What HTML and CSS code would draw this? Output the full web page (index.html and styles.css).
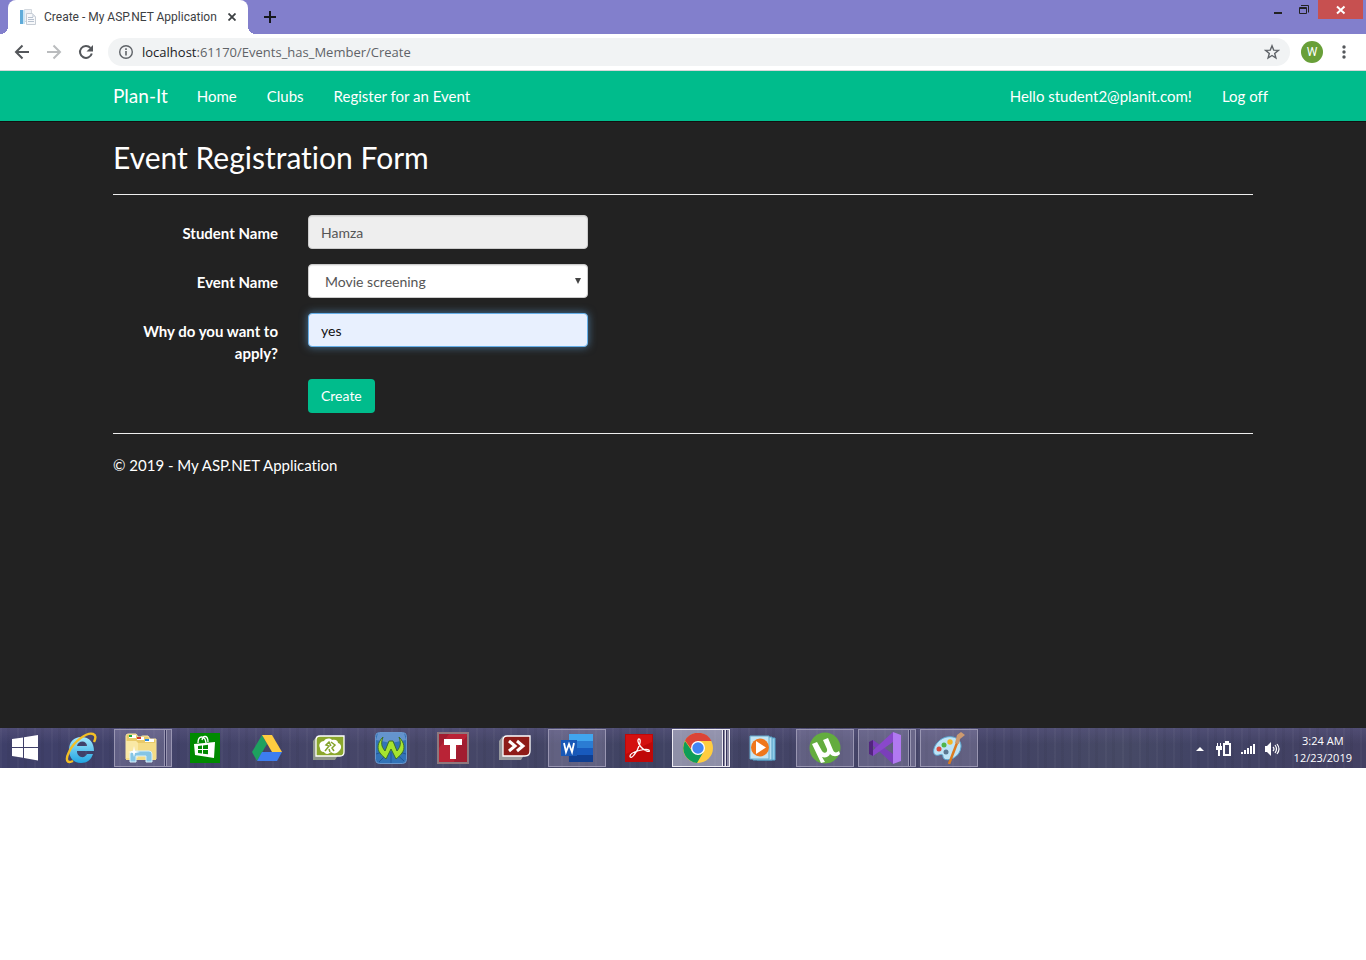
FILE: index.html
```html
<!DOCTYPE html>
<html lang="en">
<head>
<meta charset="utf-8">
<title>Create - My ASP.NET Application</title>
<link rel="stylesheet" href="styles.css">
</head>
<body>
<div class="tabstrip">
  <div class="tab">
    <svg class="tab-icon" width="16" height="16" viewBox="0 0 16 16"><path fill="#eef1f5" stroke="#d3d8de" d="M4.500 .5h7v12h-7z"/><path fill="#5fabd9" d="M0 1h3v14H0z"/><path fill="#c9e4f4" d="M3 1h2v14H3z"/><path fill="#f7f8fa" stroke="#c6ccd4" d="M6.500 4.500h6l3 3v8h-9z"/><path stroke="#b6c1cf" d="M8 8.500h5M8 10.500h6M8 12.500h6"/><path fill="#d7dde5" d="M12 4v4h4z"/></svg>
    <span class="tab-title">Create - My ASP.NET Application</span>
    <button class="icon-button tab-close" aria-label="Close tab"><svg width="8" height="8" viewBox="0 0 8 8"><path fill="none" stroke="#3c4043" stroke-width="1.800" d="M.5 .5l7 7M7.500 .5l-7 7"/></svg></button>
  </div>
  <button class="icon-button new-tab" aria-label="New tab"><svg width="12" height="12" viewBox="0 0 12 12"><path stroke="#17181d" stroke-width="2" d="M6 0v12M0 6h12"/></svg></button>
  <div class="window-controls">
    <button class="icon-button window-button" aria-label="Minimize"><svg width="12" height="12" viewBox="0 0 12 12"><path fill="#222" d="M2 8h8v2H2z"/></svg></button>
    <button class="icon-button window-button" aria-label="Restore"><svg width="12" height="12" viewBox="0 0 12 12"><path fill="none" stroke="#222" d="M1.500 3.500h7v6h-7zM1 4.500h8M3 1.500h7.500v7"/></svg></button>
    <button class="icon-button window-close" aria-label="Close"><svg width="10" height="10" viewBox="0 0 10 10"><path stroke="#fff" stroke-width="2" d="M1 1.500l7.500 7M8.500 1.500L1 8.500"/></svg></button>
  </div>
</div>
<div class="toolbar">
  <button class="icon-button nav-button" aria-label="Back"><svg width="16" height="16" viewBox="0 0 16 16"><path fill="none" stroke="#54575b" stroke-width="2" d="M15 8H2.500M8.500 1.500L2 8l6.500 6.500"/></svg></button>
  <button class="icon-button nav-button" aria-label="Forward"><svg width="16" height="16" viewBox="0 0 16 16"><path fill="none" stroke="#babcbe" stroke-width="2" d="M1 8h12.500M7.500 1.500L14 8l-6.500 6.500"/></svg></button>
  <button class="icon-button nav-button" aria-label="Reload"><svg width="16" height="16" viewBox="0 0 16 16"><path fill="none" stroke="#54575b" stroke-width="2" d="M13.800 9.500A6 6 0 1 1 12.500 3.900"/><path fill="#54575b" d="M15 1v6.500H8.500z"/></svg></button>
  <div class="address">
    <svg width="16" height="16" viewBox="0 0 16 16"><circle cx="8" cy="8" r="6.300" fill="none" stroke="#5f6368" stroke-width="1.400"/><path fill="#5f6368" d="M7.200 7h1.600v4.500H7.200zM7.200 4.300h1.600v1.600H7.200z"/></svg>
    <span class="url"><span class="url-host">localhost</span>:61170/Events_has_Member/Create</span>
    <button class="icon-button" aria-label="Bookmark this page"><svg width="16" height="16" viewBox="0 0 16 16"><path fill="none" stroke="#5f6368" stroke-width="1.400" d="M8 1.800l1.700 4.300 4.600.3-3.600 3 1.200 4.600L8 11.500 4.100 14l1.200-4.600-3.600-3 4.600-.3z"/></svg></button>
  </div>
  <button class="avatar" aria-label="Profile W">W</button>
  <button class="icon-button menu" aria-label="Menu"><svg width="4" height="14" viewBox="0 0 4 14"><g fill="#54575b"><circle cx="2" cy="2" r="1.700"/><circle cx="2" cy="7" r="1.700"/><circle cx="2" cy="12" r="1.700"/></g></svg></button>
</div>

<div class="page">
  <nav class="navbar">
    <div class="container navbar-inner">
      <a class="brand" href="#">Plan-It</a>
      <a class="nav-link" href="#">Home</a>
      <a class="nav-link" href="#">Clubs</a>
      <a class="nav-link" href="#">Register for an Event</a>
      <div class="nav-right">
        <a class="nav-link" href="#">Hello student2@planit.com!</a>
        <a class="nav-link" href="#">Log off</a>
      </div>
    </div>
  </nav>
  <main class="container">
    <h2 class="title">Event Registration Form</h2>
    <hr class="rule">
    <form class="form">
      <label class="label" for="student">Student Name</label>
      <input class="control control-readonly" id="student" value="Hamza" readonly>
      <label class="label" for="event">Event Name</label>
      <div class="select-wrap">
        <select class="control control-select" id="event"><option>Movie screening</option></select>
        <svg class="select-arrow" width="6" height="6" viewBox="0 0 6 6"><path fill="#444" d="M0 0h6L3 6z"/></svg>
      </div>
      <label class="label" for="reason">Why do you want to apply?</label>
      <input class="control control-focus" id="reason" value="yes">
      <button class="submit" type="button">Create</button>
    </form>
    <hr class="rule">
    <footer>© 2019 - My ASP.NET Application</footer>
  </main>
</div>

<div class="taskbar">
  <button class="start" aria-label="Start"><svg width="26" height="26" viewBox="0 0 26 26"><path fill="#fff" d="M0 4l11-1.600V12H0zM12 2.200L26 0v12H12zM0 13h11v9.700L0 21zM12 13h14v12.500L12 23z"/></svg></button>
  <div class="apps">
    <button class="app" aria-label="Internet Explorer"><svg width="32" height="32" viewBox="0 0 32 32"><defs><linearGradient id="ie" x2="0" y2="1"><stop stop-color="#a5e8fc"/><stop offset="1" stop-color="#20a5e2"/></linearGradient></defs><path fill="url(#ie)" fill-rule="evenodd" d="M29 19H12c0 7 8 8 10 3h6c-2 6-6 9-12 9C8 31 4 25 4 18 4 10 9 5 16 5c9 0 13 6 13 14zM12 14h10c0-6-9-6-10 0z"/><path fill="none" stroke="#f3bf25" stroke-width="2.400" d="M8 29C2 32 0 28 4 20 9 9 22 0 28 2c3 1 3 4 1 8"/></svg></button>
    <button class="app app-open app-stack" aria-label="File Explorer"><svg width="32" height="30" viewBox="0 0 32 30"><path fill="#e8ca69" stroke="#f9e9aa" d="M1 3q0-2 2-2h8l2 3h3q0-1 2-1h5l2 3h6v20H1z"/><path fill="#fff" d="M4 2h7v3H4zm8 2h7v3h-7zm8 2h9v3h-9z"/><path fill="#1cab3d" d="M4 2h3v2H4z"/><path fill="#d43a28" d="M12 4h4v2h-4z"/><path fill="#288ce0" d="M20 6h4v2h-4z"/><path fill="#f4dc86" d="M1 8h10l2 2h18v17H1z"/><path fill="#f9e8a5" d="M1 8h10l2 2v15H1z"/><path fill="#85c5e5" stroke="#d6f0fb" d="M5 29v-8q0-3 3-3h16q3 0 3 3v8h-6v-6H11v6z"/><path fill="#fff" d="M9 13l1 5 5 1-5 1-1 4-1-4-5-1 5-1z"/></svg></button>
    <button class="app" aria-label="Store"><svg width="30" height="30" viewBox="0 0 30 30"><path fill="#008a00" d="M0 0h30v30H0z"/><path fill="none" stroke="#fff" stroke-width="1.300" d="M8 10c0-8 7-8 8 0M12 7c1-5 6-5 6 2"/><path fill="#fff" d="M4 11l21-2-1 16-19-3z"/><path fill="#008a00" d="M8 13l4-.5V16H8zm5-.6l5-.7V16h-5zM8 17h4v3.500L8 20zm5 0h5v4.300l-5-.6z"/></svg></button>
    <button class="app" aria-label="Google Drive"><svg width="30" height="26" viewBox="0 0 30 26"><path fill="#1da15f" d="M10 0l5 9L5 26l-5-9z"/><path fill="#ffcd40" d="M10 0h10l10 17H20z"/><path fill="#3d7df0" d="M10 17h20l-5 9H5z"/></svg></button>
    <button class="app" aria-label="Green globe"><svg width="32" height="26" viewBox="0 0 32 26"><path fill="#8d948a" d="M0 6l4-5v19h21l-3 5H0z"/><path fill="#8ba72c" stroke="#fff" stroke-width="1.300" d="M3 5q0-4 4-4h24v16q0 4-4 4H3z"/><path fill="#fff" d="M7 13c-2-4 1-7 4-7 2-3 6-3 8-1 4-1 6 1 6 3 4 1 4 6 1 8-2 3-6 3-8 1-3 3-6 2-7 0-3 0-4-2-4-4z"/><path fill="none" stroke="#83a32b" stroke-width="1.500" d="M12 16l4-5-3-1 3-3 2 4M18 7l4 3-3 3 2 3M17 17l-1-3"/></svg></button>
    <button class="app" aria-label="WildTangent"><svg width="32" height="32" viewBox="0 0 32 32"><rect x=".5" y=".5" width="31" height="31" rx="4" fill="#3273b7" stroke="#6a96cb"/><path fill="#79a3d6" d="M3 1h26l2 7-15 3L1 8z" opacity=".7"/><path stroke="#225698" d="M1 22l13-4M4 30l11-11M16 31V20M29 29L18 19M31 22l-13-4"/><path fill="#a6e42f" stroke="#3c6f2b" d="M8 5C2 11 2 17 5 21c2 3 4 4 6 6l5-10 5 10c2-2 4-3 6-6 3-4 3-10-3-16 2 6 2 9-2 14L18 9h-4l-4 10C6 14 6 11 8 5z"/></svg></button>
    <button class="app" aria-label="T application"><svg width="32" height="32" viewBox="0 0 32 32"><path fill="#b92336" stroke="#8d787e" stroke-width="2" d="M1 1h30v30H1z"/><path fill="#84172b" d="M2 2h10L2 16zM20 16L30 4v26H17z" opacity=".45"/><path fill="#fff" d="M7 7h18v6h-6v14h-6V13H7z"/></svg></button>
    <button class="app" aria-label="Double arrow"><svg width="32" height="26" viewBox="0 0 32 26"><path fill="#989a9d" d="M0 6l4-5v19h21l-3 5H0z"/><path fill="#8e1c18" stroke="#fff" stroke-width="1.300" d="M4 5q0-4 4-4h23v15q0 5-5 5H4z"/><path fill="none" stroke="#fff" stroke-width="3" d="M10 6l6 5-6 5M18 6l6 5-6 5"/></svg></button>
    <button class="app app-open" aria-label="Word"><svg width="32" height="28" viewBox="0 0 32 28"><path fill="#41a5ee" d="M8 0h24v7H8z"/><path fill="#2b7cd3" d="M8 7h24v7H8z"/><path fill="#185abd" d="M8 14h24v7H8z"/><path fill="#103f91" d="M8 21h24v7H8z"/><path fill="#1858b7" d="M0 6h16v16H0z"/><path fill="none" stroke="#fff" stroke-width="1.800" d="M3 9l2 9 3-8 3 8 2-9"/></svg></button>
    <button class="app" aria-label="Adobe Reader"><svg width="28" height="28" viewBox="0 0 28 28"><path fill="#bf0808" d="M0 0h28v28H0z"/><path fill="#e31716" d="M1 1h26v7L1 20z" opacity=".6"/><path fill="none" stroke="#fff" stroke-width="1.300" d="M5 22c0-4 16-8 19-6 2 3-5 1-8-3-3-3-4-8-2-8 3 0 0 10-5 16-2 3-4 3-4 1z"/></svg></button>
    <button class="app app-open app-active app-multi" aria-label="Chrome"><svg width="30" height="30" viewBox="0 0 30 30"><circle cx="15" cy="15" r="15" fill="#ffcd40"/><path fill="#0f9d58" d="M2 8a15 15 0 0 0 12 22l7-12-6-3-6 3z"/><path fill="#db4437" d="M2 7.500A15 15 0 0 1 28.500 8H15l-6 9z"/><circle cx="15" cy="15" r="7" fill="#fff"/><circle cx="15" cy="15" r="5.700" fill="#4285f4"/></svg></button>
    <button class="app" aria-label="Media Player"><svg width="28" height="26" viewBox="0 0 28 26"><path fill="#91cde8" stroke="#54a5ce" d="M8 3h18v22H8z"/><path fill="#b5def0" stroke="#559fc5" d="M4 2h19v23H4z"/><path fill="#c3e5f3" stroke="#66adcf" d="M1 1h19v23H1z"/><circle cx="11" cy="12.500" r="9" fill="#ef771c"/><path fill="#fff" d="M7 6l10 6.500L7 19z"/></svg></button>
    <button class="app app-open" aria-label="uTorrent"><svg width="32" height="32" viewBox="0 0 32 32"><circle cx="16" cy="16" r="15.500" fill="#63ac3e"/><path fill="#fff" d="M3 12l5-2 5 9c2 3 6 2 5-2l-4-9 5-2 5 12c1 3 4 3 6 1l1 3c-3 3-7 3-10 0-1 3-5 4-8 3l3 5-4 1z"/></svg></button>
    <button class="app app-open app-stack" aria-label="Visual Studio"><svg width="32" height="32" viewBox="0 0 32 32"><path fill="#7a3fba" d="M0 10l4-2 20 14v10z"/><path fill="#8948cb" d="M0 22l4 2L24 10V0z"/><path fill="#52257f" d="M0 10l4-2v16l-4-2z"/><path fill="#b179f1" d="M24 0l8 3v26l-8 3z"/></svg></button>
    <button class="app app-open" aria-label="Paint"><svg width="32" height="32" viewBox="0 0 32 32"><path fill="#bde4f7" stroke="#5ca8d2" d="M5 10C13 1 29 4 28 15c-1 12-17 16-18 10 0-3-1-3-4-2-7 2-7-7-1-13z"/><circle cx="6" cy="17" r="2.500" fill="#dc4c3d"/><circle cx="11" cy="13" r="2.500" fill="#50b54a"/><circle cx="17" cy="10" r="2.700" fill="#f1b527"/><circle cx="13" cy="20" r="2.500" fill="#5b7892"/><path stroke="#db7b20" stroke-width="2.500" d="M16 32l8-21"/><path fill="#cd9a70" d="M22 11l2-8 4-3 4 3-5 4-1 5z"/></svg></button>
  </div>
  <div class="tray">
    <svg width="8" height="4" viewBox="0 0 8 4"><path fill="#fff" d="M4 0l4 4H0z"/></svg>
    <svg width="16" height="16" viewBox="0 0 16 16"><path fill="none" stroke="#fff" stroke-width="2" d="M8 3h6v11H8z"/><path fill="#fff" d="M9 0h4v2H9zM1 2h1v3h2V2h1v3h1v4H4v6H2V9H0V5h1z"/></svg>
    <svg width="16" height="16" viewBox="0 0 16 16"><path fill="#fff" d="M1 11h2v2H1zm3-2h2v4H4zm3-2h2v6H7zm3-2h2v8h-2zm3-2h2v10h-2z"/></svg>
    <svg width="16" height="16" viewBox="0 0 16 16"><path fill="#fff" d="M1 5h2l4-4v14l-4-4H1z"/><path fill="none" stroke="#fff" stroke-width="1.200" d="M9 6q2 2 0 4M11 4q3 4 0 8M13 3q4 5 0 10"/></svg>
    <div class="clock"><span>3:24 AM</span><span>12/23/2019</span></div>
  </div>
</div>
</body>
</html>
```
FILE: styles.css
```css
* { box-sizing: border-box; }
body { margin: 0; background: #fff; font-family: Lato, sans-serif; font-size: 15px; line-height: 22px; color: #fff; font-variant-ligatures: none; }
svg { display: block; flex: none; }
button { font: inherit; border: 0; padding: 0; cursor: pointer; }
.icon-button { display: flex; align-items: center; justify-content: center; background: transparent; }

.tabstrip { display: flex; height: 34px; padding-left: 8px; background: #827fcc; }
.tab { display: flex; align-items: center; width: 240px; padding: 0 12px; background: #fff; border-radius: 8px 8px 0 0; position: relative; }
.tab::before, .tab::after { content: ""; position: absolute; bottom: 0; width: 8px; height: 8px; }
.tab::before { left: -8px; background: radial-gradient(circle at 0 0, transparent 8px, #fff 8px); }
.tab::after { right: -8px; background: radial-gradient(circle at 100% 0, transparent 8px, #fff 8px); }
.tab-title { flex: 1; margin-left: 8px; white-space: nowrap; font-family: Roboto, sans-serif; font-size: 12px; color: #3c4043; }
.tab-close { width: 8px; }
.new-tab { width: 28px; margin-left: 8px; }
.window-controls { display: flex; align-items: flex-start; margin-left: auto; padding-right: 3px; }
.window-button { width: 26px; height: 19px; }
.window-close { width: 45px; height: 19px; margin-left: 1px; background: #c75050; }

.toolbar { display: flex; align-items: center; height: 37px; padding: 0 14px; background: #fff; border-bottom: 1px solid #d5d7d9; }
.nav-button { width: 16px; margin-right: 16px; }
.nav-button:nth-child(3) { margin-right: 14px; }
.address { display: flex; align-items: center; flex: 1; height: 28px; padding: 0 10px; border-radius: 14px; background: #f1f3f4; }
.url { flex: 1; margin-left: 8px; font-family: "Open Sans", sans-serif; font-size: 13px; color: #5f6368; }
.url-host { color: #202124; }
.avatar { width: 22px; height: 22px; margin-left: 11px; border-radius: 50%; background: #689f38; color: #fff; font-family: Roboto, sans-serif; font-size: 12px; }
.menu { width: 16px; margin-left: 13px; }

.page { min-height: 657px; background: #222; }
.navbar { height: 51px; background: #00bc8c; border-bottom: 1px solid #111; }
.container { max-width: 1170px; margin: 0 auto; padding: 0 15px; }
.navbar-inner { display: flex; align-items: center; height: 50px; }
.brand { margin-right: 14px; font-size: 19px; color: #fff; text-decoration: none; }
.nav-link { padding: 0 15px; color: #fff; text-decoration: none; white-space: nowrap; }
.nav-right { display: flex; margin-left: auto; margin-right: -30px; }
.title { margin: 0; padding: 18px 0 19px; font-size: 30px; line-height: 35px; font-weight: 400; }
.rule { height: 1px; margin: 0 0 20px; border: 0; background: #eee; }
.form { display: grid; grid-template-columns: 165px 280px; column-gap: 30px; row-gap: 15px; margin-bottom: 20px; }
.label { padding-top: 7px; font-weight: 700; text-align: right; }
.control { width: 100%; height: 34px; padding: 0 12px; border: 1px solid #ccc; border-radius: 4px; background: #fff; color: #555; font: 14px/20px Lato, sans-serif; box-shadow: inset 0 1px 1px rgba(0, 0, 0, .08); outline: 0; }
.control-readonly { background: #eee; }
.select-wrap { position: relative; }
.control-select { padding: 2px 16px 0; appearance: none; }
.select-arrow { position: absolute; top: 14px; right: 7px; }
.control-focus { border-color: #66afe9; background: #e8f0fe; color: #111; box-shadow: 0 0 8px rgba(102, 175, 233, .6); }
.submit { grid-column: 2; justify-self: start; height: 34px; padding: 0 13px; border-radius: 4px; background: #00bc8c; color: #fff; font-size: 14px; }

.taskbar { display: flex; height: 40px; background: repeating-linear-gradient(90deg, rgba(255, 255, 255, .03) 0 2px, transparent 2px 7px, rgba(0, 0, 0, .04) 7px 10px, transparent 10px 17px), linear-gradient(180deg, rgba(90, 86, 128, .6) 0, transparent 40%), linear-gradient(90deg, #3e3f69, #474768 30%, #404363 48%, #454468 65%, #424364 74%, #474a66 82%, #414365 88%, #434062); }
.start { display: flex; align-items: center; justify-content: center; width: 52px; padding-right: 2px; background: transparent; }
.apps { display: flex; gap: 4px; }
.app { display: flex; align-items: center; justify-content: center; width: 58px; height: 38px; margin-top: 1px; background: transparent; position: relative; }
.app-open { border: 1px solid #9996b2; background: rgba(190, 185, 215, .25); }
.app-stack, .app-multi { padding-right: 5px; }
.app-stack::after { content: ""; position: absolute; top: 0; bottom: 0; right: 0; width: 4px; border-left: 1px solid #9996b2; background: #6a6789; box-shadow: -1px 0 #36345c, -2px 0 #9996b2; }
.app-active { border-color: #eceaf2; background: rgba(220, 220, 235, .5); }
.app-multi { padding-right: 7px; }
.app-multi::after { content: ""; position: absolute; top: 0; bottom: 0; right: 0; width: 7px; background: linear-gradient(90deg, #eceaf2 1px, #36345c 1px 2px, #8b89a2 2px 3px, #eceaf2 3px 4px, #36345c 4px 5px, #8b89a2 5px); }
.tray { display: flex; align-items: center; gap: 8px; margin-left: auto; padding: 2px 14px 0 0; }
.tray > svg:first-child { margin-right: 4px; }
.clock { display: flex; flex-direction: column; align-items: center; margin-left: 6px; font-family: "Open Sans", sans-serif; font-size: 11px; line-height: 17px; }
```
